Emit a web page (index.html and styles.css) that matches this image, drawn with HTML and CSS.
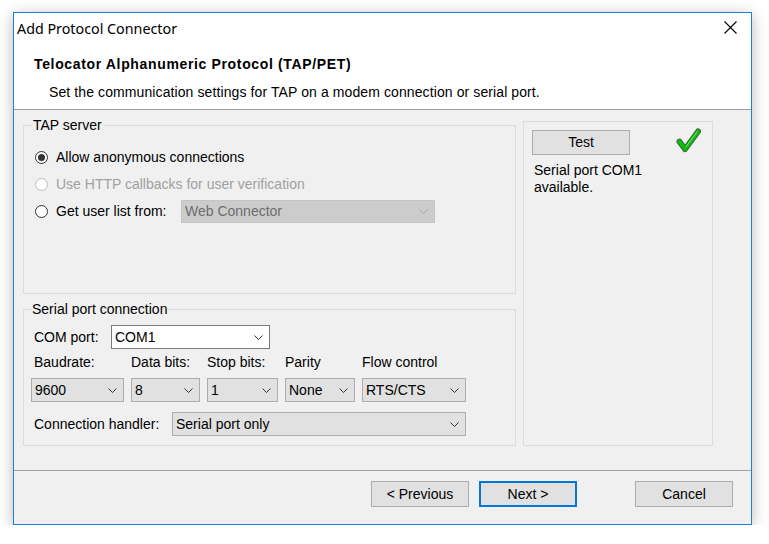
FILE: index.html
```html
<!DOCTYPE html>
<html>
<head>
<meta charset="utf-8">
<title>Add Protocol Connector</title>
<link rel="stylesheet" href="styles.css">
</head>
<body>
<div class="window">
  <div class="titlebar">
    <span class="title">Add Protocol Connector</span>
    <svg class="close" width="13" height="13" viewBox="0 0 13 13"><path d="M0.5 0.5 L12.5 12.5 M12.5 0.5 L0.5 12.5" stroke="#000" stroke-width="1.1" fill="none"/></svg>
  </div>
  <div class="header">
    <div class="h-title">Telocator Alphanumeric Protocol (TAP/PET)</div>
    <div class="h-sub">Set the communication settings for TAP on a modem connection or serial port.</div>
  </div>
  <div class="content">
    <div class="left">
      <fieldset class="group tap">
        <legend>TAP server</legend>
        <div class="radio-row"><span class="radio checked"></span><span>Allow anonymous connections</span></div>
        <div class="radio-row disabled"><span class="radio"></span><span>Use HTTP callbacks for user verification</span></div>
        <div class="radio-row"><span class="radio"></span><span class="userlist-label">Get user list from:</span>
          <div class="combo combo-disabled userlist"><span>Web Connector</span><svg class="chev" width="9" height="5" viewBox="0 0 9 5"><polyline points="0.5,0.5 4.5,4.5 8.5,0.5" fill="none" stroke="#a6a6a6" stroke-width="1"/></svg></div>
        </div>
      </fieldset>
      <fieldset class="group serial">
        <legend>Serial port connection</legend>
        <div class="com-row">
          <span class="row-label com-label">COM port:</span>
          <div class="combo combo-white com"><span>COM1</span><svg class="chev" width="9" height="5" viewBox="0 0 9 5"><polyline points="0.5,0.5 4.5,4.5 8.5,0.5" fill="none" stroke="#333" stroke-width="1"/></svg></div>
        </div>
        <div class="settings">
          <span class="col-label first">Baudrate:</span>
          <span class="col-label">Data bits:</span>
          <span class="col-label">Stop bits:</span>
          <span class="col-label">Parity</span>
          <span class="col-label">Flow control</span>
          <div class="combo"><span>9600</span><svg class="chev" width="9" height="5" viewBox="0 0 9 5"><polyline points="0.5,0.5 4.5,4.5 8.5,0.5" fill="none" stroke="#333" stroke-width="1"/></svg></div>
          <div class="combo"><span>8</span><svg class="chev" width="9" height="5" viewBox="0 0 9 5"><polyline points="0.5,0.5 4.5,4.5 8.5,0.5" fill="none" stroke="#333" stroke-width="1"/></svg></div>
          <div class="combo"><span>1</span><svg class="chev" width="9" height="5" viewBox="0 0 9 5"><polyline points="0.5,0.5 4.5,4.5 8.5,0.5" fill="none" stroke="#333" stroke-width="1"/></svg></div>
          <div class="combo"><span>None</span><svg class="chev" width="9" height="5" viewBox="0 0 9 5"><polyline points="0.5,0.5 4.5,4.5 8.5,0.5" fill="none" stroke="#333" stroke-width="1"/></svg></div>
          <div class="combo"><span>RTS/CTS</span><svg class="chev" width="9" height="5" viewBox="0 0 9 5"><polyline points="0.5,0.5 4.5,4.5 8.5,0.5" fill="none" stroke="#333" stroke-width="1"/></svg></div>
        </div>
        <div class="handler-row">
          <span class="row-label handler-label">Connection handler:</span>
          <div class="combo handler"><span>Serial port only</span><svg class="chev" width="9" height="5" viewBox="0 0 9 5"><polyline points="0.5,0.5 4.5,4.5 8.5,0.5" fill="none" stroke="#333" stroke-width="1"/></svg></div>
        </div>
      </fieldset>
    </div>
    <div class="panel">
      <div class="panel-top">
        <div class="btn test">Test</div>
        <svg class="check" width="25" height="25" viewBox="0 0 26 26">
          <path d="M3.5 14 L9.5 22 L23 3.5" fill="none" stroke="#3f5f3f" stroke-width="6" stroke-linecap="round" stroke-linejoin="round"/>
          <path d="M3.5 14 L9.5 22 L23 3.5" fill="none" stroke="#12b812" stroke-width="4.2" stroke-linecap="round" stroke-linejoin="round"/>
          <path d="M10.5 19.5 L22 4" fill="none" stroke="#7be87b" stroke-width="1" stroke-linecap="round"/>
        </svg>
      </div>
      <div class="status">Serial port COM1<br>available.</div>
    </div>
  </div>
  <div class="footer">
    <div class="btn">&lt; Previous</div>
    <div class="btn default">Next &gt;</div>
    <div class="btn cancel">Cancel</div>
  </div>
</div>
</body>
</html>
```

FILE: styles.css
```css
html, body {
  margin: 0;
  padding: 0;
  background: #ffffff;
}

body {
  font-family: "Liberation Sans", Arial, sans-serif;
  font-size: 14px;
  line-height: 15px;
  color: #000;
}

.window {
  margin: 12px 0 0 13px;
  width: 739px;
  height: 513px;
  box-sizing: border-box;
  border: 1px solid #1b80d6;
  background: #f0f0f0;
  display: flex;
  flex-direction: column;
  box-shadow: 0 3px 14px rgba(0, 0, 0, 0.28);
}

.titlebar {
  height: 32px;
  flex: none;
  background: #fff;
  display: flex;
  align-items: center;
  justify-content: space-between;
  padding: 0 14px 0 3px;
}

.title {
  font-family: "Segoe UI", "Noto Sans", sans-serif;
  font-size: 14.3px;
  line-height: 20px;
}

.close {
  display: block;
  margin-top: -3px;
}

.header {
  flex: none;
  background: #fff;
  border-bottom: 1px solid #a0a0a0;
  padding: 12px 0 9px 0;
}

.h-title {
  font-weight: bold;
  letter-spacing: 0.65px;
  padding-left: 20px;
}

.h-sub {
  margin-top: 13px;
  padding-left: 35px;
  letter-spacing: 0.1px;
}

.content {
  flex: 1;
  display: flex;
  gap: 7px;
  padding: 8px 0 24px 9px;
  min-height: 0;
}

.left {
  width: 493px;
  display: flex;
  flex-direction: column;
  gap: 8px;
}

.group {
  margin: 0;
  border: 1px solid #dcdcdc;
  min-width: 0;
}

.group legend {
  padding: 0 1px;
  line-height: 15px;
}

.tap {
  flex: 1 1 auto;
  padding: 11px 0 0 11px;
}

.tap legend {
  margin-left: -3px;
}

.serial {
  flex: none;
  padding: 8px 0 9px 7px;
}

.radio-row {
  height: 27px;
  display: flex;
  align-items: center;
}

.radio {
  width: 13px;
  height: 13px;
  box-sizing: border-box;
  border: 1px solid #333;
  border-radius: 50%;
  background: #fff;
  margin-right: 8px;
  display: flex;
  align-items: center;
  justify-content: center;
  flex: none;
}

.radio.checked::after {
  content: "";
  width: 7px;
  height: 7px;
  border-radius: 50%;
  background: #333;
}

.radio-row.disabled {
  color: #a0a0a0;
}

.radio-row.disabled .radio {
  border-color: #bcbcbc;
}

.userlist-label {
  width: 125px;
  flex: none;
}

.combo {
  height: 24px;
  box-sizing: border-box;
  background: #e1e1e1;
  border: 1px solid #adadad;
  display: flex;
  align-items: center;
  justify-content: space-between;
  padding: 0 6px 0 3px;
}

.combo .chev {
  display: block;
  flex: none;
}

.combo-disabled {
  background: #cccccc;
  border-color: #c4c4c4;
  color: #6d6d6d;
}

.userlist {
  width: 254px;
  height: 23px;
}

.combo-white {
  background: #fff;
  border-color: #7a7a7a;
}

.com-row, .handler-row {
  display: flex;
  align-items: center;
}

.row-label {
  padding-left: 3px;
  box-sizing: border-box;
  flex: none;
}

.com-label {
  width: 80px;
}

.com {
  width: 159px;
}

.settings {
  margin-top: 6px;
  display: grid;
  grid-template-columns: 93px 69px 71px 70px 104px;
  column-gap: 7px;
  row-gap: 8px;
}

.col-label.first {
  padding-left: 3px;
}

.handler-row {
  margin-top: 10px;
}

.handler-label {
  width: 141px;
}

.handler {
  width: 294px;
}

.panel {
  width: 190px;
  box-sizing: border-box;
  margin-top: 3px;
  border: 1px solid #dcdcdc;
  padding: 8px 0 0 8px;
}

.panel-top {
  display: flex;
  align-items: flex-start;
  justify-content: space-between;
  padding-right: 11px;
}

.check {
  display: block;
  margin-top: -2px;
}

.btn {
  width: 98px;
  height: 26px;
  box-sizing: border-box;
  background: #e1e1e1;
  border: 1px solid #adadad;
  display: flex;
  align-items: center;
  justify-content: center;
}

.test {
  height: 25px;
}

.status {
  margin-top: 7px;
  padding-left: 2px;
  line-height: 17px;
}

.footer {
  flex: none;
  border-top: 1px solid #a0a0a0;
  padding: 10px 18px 17px 0;
  display: flex;
  justify-content: flex-end;
  gap: 10px;
}

.btn.default {
  border: 2px solid #0078d7;
}

.btn.cancel {
  margin-left: 48px;
}
```
